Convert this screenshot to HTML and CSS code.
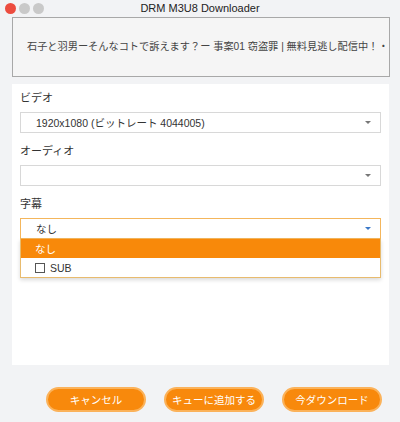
FILE: index.html
```html
<!DOCTYPE html>
<html>
<head>
<meta charset="utf-8">
<title>DRM M3U8 Downloader</title>
<link rel="stylesheet" href="styles.css">
</head>
<body>
  <div class="titlebar">
    <div class="lights">
      <span class="light red"></span>
      <span class="light"></span>
      <span class="light"></span>
    </div>
    <div class="wintitle">DRM M3U8 Downloader</div>
  </div>

  <div class="namebox">石子と羽男ーそんなコトで訴えます？ー 事案01 窃盗罪 | 無料見逃し配信中！・</div>

  <div class="panel">
    <div class="label">ビデオ</div>
    <div class="select">
      <span class="value">1920x1080 (ビットレート 4044005)</span>
      <span class="caret"></span>
    </div>

    <div class="label">オーディオ</div>
    <div class="select">
      <span class="value"></span>
      <span class="caret"></span>
    </div>

    <div class="label">字幕</div>
    <div class="dropwrap">
      <div class="select open">
        <span class="value">なし</span>
        <span class="caret blue"></span>
      </div>
      <div class="menu">
        <div class="option active">なし</div>
        <div class="option"><span class="check"></span>SUB</div>
      </div>
    </div>
  </div>

  <div class="actions">
    <button class="boton">キャンセル</button>
    <button class="boton">キューに追加する</button>
    <button class="boton">今ダウンロード</button>
  </div>
</body>
</html>
```

FILE: styles.css
```css
body {
    margin: 0;
    background-color: #f2f3f5;
    font-family: "Liberation Sans", "Noto Sans CJK JP", sans-serif;
    color: #333;
    width: 400px;
    height: 422px;
    overflow: hidden;
}
.titlebar {
    height: 17px;
    position: relative;
    display: flex;
    align-items: center;
}
.lights {
    display: flex;
    gap: 3px;
    padding-left: 5px;
}
.light {
    width: 11px;
    height: 11px;
    border-radius: 50%;
    background: #c9c9c9;
}
.light.red {
    background: #ec4c3f;
}
.wintitle {
    position: absolute;
    left: 0;
    right: 0;
    top: 2px;
    text-align: center;
    font-size: 11px;
    color: #222;
}
.namebox {
    margin-left: 12px;
    width: 362px;
    height: 58px;
    line-height: 58px;
    border: 1px solid #a8a8a8;
    background: #f5f5f5;
    padding-left: 14px;
    font-size: 10.2px;
    color: #444;
    white-space: nowrap;
    overflow: hidden;
}
.panel {
    margin: 7px 0 0 12px;
    width: 361px;
    height: 274px;
    background: #fff;
    padding: 7px 8px 0 8px;
}
.label {
    font-size: 11px;
    line-height: 14px;
    color: #333;
    margin-bottom: 7px;
}
.select {
    height: 19px;
    border: 1px solid #d8d8d8;
    display: flex;
    align-items: center;
    padding: 0 9px 0 0;
    margin-bottom: 11px;
    font-size: 10.5px;
    color: #333;
    background: #fff;
}
.value {
    flex: 1;
    padding-left: 15px;
}
.caret {
    width: 0;
    height: 0;
    border-left: 3px solid transparent;
    border-right: 3px solid transparent;
    border-top: 3px solid #777;
}
.caret.blue {
    border-top-color: #3a78c8;
}
.dropwrap {
    position: relative;
}
.select.open {
    border-color: #f4b65c;
    margin-bottom: 0;
}
.menu {
    position: absolute;
    top: 21px;
    left: 0;
    right: 0;
    border: 1px solid #e8bb6e;
    border-top: none;
    background: #fff;
    box-shadow: 0 2px 4px rgba(0, 0, 0, 0.15);
}
.option {
    height: 19px;
    display: flex;
    align-items: center;
    padding-left: 14px;
    font-size: 10.5px;
    color: #333;
}
.option.active {
    background: #f8890a;
    color: #fff;
}
.check {
    width: 8px;
    height: 8px;
    border: 1px solid #555;
    margin-right: 5px;
}
.actions {
    display: flex;
    justify-content: flex-end;
    gap: 18px;
    padding-right: 18px;
    margin-top: 22px;
}
.boton {
    width: 100px;
    height: 25px;
    border-radius: 13px;
    background: #f8890c;
    border: 2px solid #fbb25a;
    color: #fff;
    font-family: "Liberation Sans", "Noto Sans CJK JP", sans-serif;
    font-size: 10.5px;
    padding: 0;
}
```
